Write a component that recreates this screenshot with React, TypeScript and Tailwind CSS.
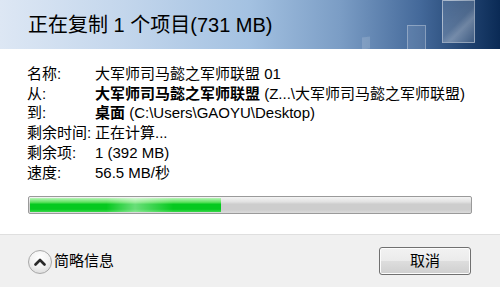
const font = {
  fontFamily: '"Liberation Sans", "Noto Sans CJK SC", sans-serif',
};

const rows: { label: string; value: React.ReactNode }[] = [
  { label: "名称:", value: "大军师司马懿之军师联盟 01" },
  {
    label: "从:",
    value: (
      <>
        <span className="font-bold">大军师司马懿之军师联盟</span> (Z...\大军师司马懿之军师联盟)
      </>
    ),
  },
  {
    label: "到:",
    value: (
      <>
        <span className="font-bold">桌面</span> (C:\Users\GAOYU\Desktop)
      </>
    ),
  },
  { label: "剩余时间:", value: "正在计算..." },
  { label: "剩余项:", value: "1 (392 MB)" },
  { label: "速度:", value: "56.5 MB/秒" },
];

const Header = () => (
  <div className="relative h-[49px] overflow-hidden bg-[linear-gradient(90deg,#dde7f4_0%,#c3d6ec_25%,#a3c1e1_50%,#7b9dc5_68%,#44699a_84%,#0a2a55_100%)] flex items-center pl-[28px]">
    <span className="text-[20px] text-black leading-none">正在复制 1 个项目(731 MB)</span>
    <div className="absolute left-[442px] top-0 w-[33px] h-[43px] border border-white/40 bg-[linear-gradient(135deg,rgba(255,255,255,0.12)_0%,rgba(255,255,255,0.2)_50%,rgba(255,255,255,0.35)_65%,rgba(255,255,255,0.15)_100%)]" />
    <div className="absolute left-[407px] top-[25px] w-[19px] h-[26px] border border-white/30 bg-white/10" />
    <div className="absolute left-[362px] top-[37px] w-[8px] h-[12px] bg-white/15 -skew-y-6" />
  </div>
);

const Progress = ({ value }: { value: number }) => (
  <div className="mx-[28px] h-[18px] rounded-[2px] border border-[#9a9a9a] bg-[linear-gradient(180deg,#f4f4f4_0%,#e2e2e2_30%,#cdcdcd_45%,#cdcdcd_80%,#dcdcdc_100%)] p-px">
    <div
      className="h-full bg-[linear-gradient(180deg,#b8f5b8_0%,#5fe25f_30%,#06c91f_45%,#06c91f_80%,#3bd74b_100%)] relative"
      style={{ width: `${value}%` }}
    >
      <div className="absolute inset-0 bg-[linear-gradient(90deg,transparent_0%,transparent_40%,rgba(255,255,255,0.4)_55%,transparent_75%,transparent_100%)]" />
    </div>
  </div>
);

export default function App() {
  return (
    <div className="w-[500px] h-[287px] flex flex-col bg-white text-black" style={font}>
      <Header />
      <div className="flex-1 flex flex-col pt-[15px]">
        <div className="flex flex-col pl-[27px] text-[15px] leading-[19.7px]">
          {rows.map((r) => (
            <div key={r.label} className="flex">
              <span className="w-[68px] shrink-0 whitespace-nowrap">{r.label}</span>
              <span className="whitespace-nowrap">{r.value}</span>
            </div>
          ))}
        </div>
        <div className="mt-[14px]">
          <Progress value={43.5} />
        </div>
      </div>
      <div className="h-[53px] bg-[#f0f0f0] border-t border-[#dfdfdf] flex items-center justify-between pl-[28px] pr-[29px]">
        <div className="flex items-center gap-[2px] mt-[1px]">
          <div className="w-[24px] h-[24px] rounded-full border border-[#a8a8a8] bg-[radial-gradient(circle_at_50%_30%,#ffffff_0%,#f2f2f2_50%,#d4d4d4_100%)] flex items-center justify-center">
            <svg width="12" height="8" viewBox="0 0 12 8">
              <path d="M1.5 6.5 L6 2 L10.5 6.5" fill="none" stroke="#2a2a2a" strokeWidth="2.6" strokeLinecap="round" strokeLinejoin="round" />
            </svg>
          </div>
          <span className="text-[15px]">简略信息</span>
        </div>
        <button className="w-[92px] h-[28px] rounded-[3px] border border-[#707070] bg-[linear-gradient(180deg,#f2f2f2_0%,#ebebeb_48%,#dddddd_52%,#cfcfcf_100%)] text-[15px] shadow-[inset_0_0_0_1px_#fcfcfc]">
          取消
        </button>
      </div>
    </div>
  );
}
